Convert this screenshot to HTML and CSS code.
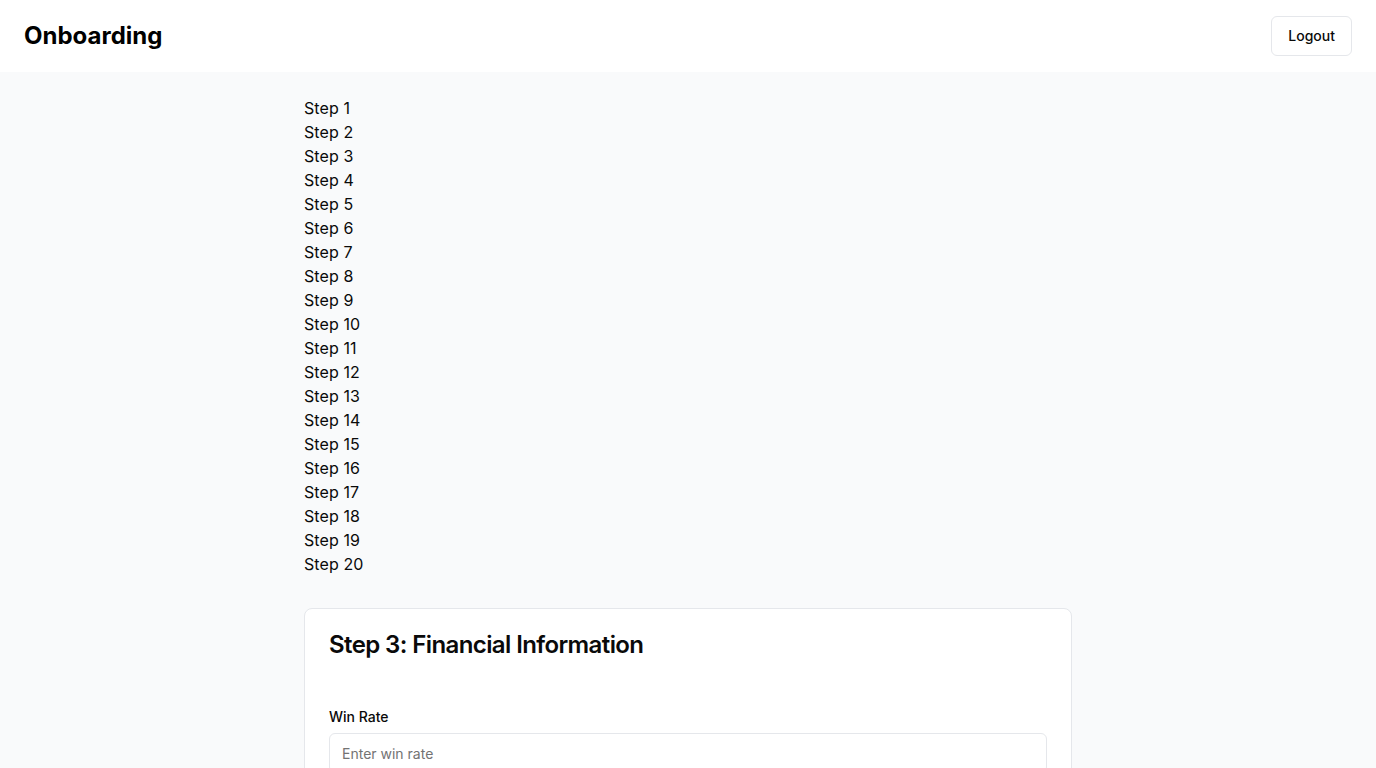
FILE: index.html
```html
<!DOCTYPE html>
<html lang="en">
<head>
<meta charset="utf-8">
<title>Onboarding</title>
<link rel="stylesheet" href="styles.css">
</head>
<body>
<header class="topbar">
  <h1 class="brand">Onboarding</h1>
  <button class="btn-outline" type="button">Logout</button>
</header>
<main class="main">
  <div class="container">
    <ol class="steps">
      <li>Step 1</li><li>Step 2</li><li>Step 3</li><li>Step 4</li><li>Step 5</li>
      <li>Step 6</li><li>Step 7</li><li>Step 8</li><li>Step 9</li><li>Step 10</li>
      <li>Step 11</li><li>Step 12</li><li>Step 13</li><li>Step 14</li><li>Step 15</li>
      <li>Step 16</li><li>Step 17</li><li>Step 18</li><li>Step 19</li><li>Step 20</li>
    </ol>
    <section class="card">
      <h2 class="card-title">Step 3: Financial Information</h2>
      <form class="form">
        <div class="field">
          <label class="label" for="winrate">Win Rate</label>
          <input class="input" id="winrate" type="text" placeholder="Enter win rate">
        </div>
      </form>
    </section>
  </div>
</main>
</body>
</html>
```

FILE: styles.css
```css
* { box-sizing: border-box; }
html, body { margin: 0; padding: 0; }
body {
  font-family: Inter, "Noto Sans", sans-serif;
  background: #f9fafb;
  color: #0a0a0a;
  height: 768px;
  overflow: hidden;
}
.topbar {
  height: 72px;
  background: #ffffff;
  display: flex;
  align-items: center;
  justify-content: space-between;
  padding: 0 24px;
}
.brand {
  margin: 0;
  font-size: 24px;
  line-height: 32px;
  font-weight: 700;
  color: #000;
}
.btn-outline {
  height: 40px;
  padding: 0 16px 1px;
  background: #fff;
  border: 1px solid #e5e7eb;
  border-radius: 6px;
  font-family: inherit;
  font-size: 14px;
  line-height: 20px;
  font-weight: 500;
  color: #0a0a0a;
}
.main {
  padding-top: 24px;
}
.container {
  width: 768px;
  margin: 0 auto;
}
.steps {
  list-style: none;
  margin: 0;
  padding: 0;
  font-size: 16px;
  line-height: 24px;
  letter-spacing: 0.1px;
  color: #0a0a0a;
}
.card {
  margin-top: 32px;
  background: #fff;
  border: 1px solid #e5e7eb;
  border-radius: 8px;
  padding: 24px;
}
.card-title {
  margin: 0;
  font-size: 24px;
  line-height: 24px;
  font-weight: 600;
  letter-spacing: -0.6px;
}
.form {
  margin-top: 52px;
}
.field {
  display: flex;
  flex-direction: column;
  gap: 8px;
}
.label {
  font-size: 14px;
  line-height: 16px;
  font-weight: 500;
}
.input {
  height: 40px;
  width: 100%;
  border: 1px solid #e5e7eb;
  border-radius: 6px;
  padding: 0 12px;
  font-family: inherit;
  font-size: 14px;
  color: #0a0a0a;
  background: #fff;
}
.input::placeholder { color: #737373; }
```
